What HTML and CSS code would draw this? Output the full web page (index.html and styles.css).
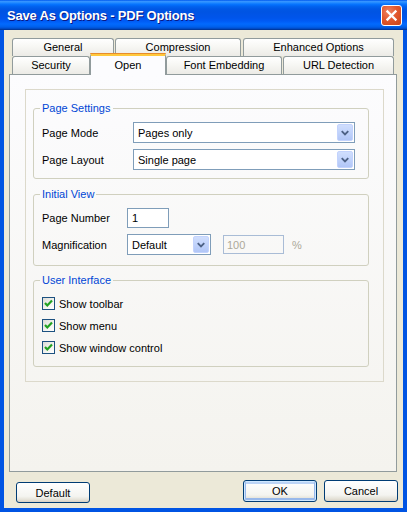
FILE: index.html
```html
<!DOCTYPE html>
<html>
<head>
<meta charset="utf-8">
<title>Save As Options - PDF Options</title>
<link rel="stylesheet" href="styles.css">
</head>
<body>
<div class="window">
  <div class="titlebar">
    <span class="title">Save As Options - PDF Options</span>
    <span class="close"><svg width="19" height="19" viewBox="0 0 19 19"><path d="M5.5 5.5 L13.5 13.5 M13.5 5.5 L5.5 13.5" stroke="#fff" stroke-width="2.4" stroke-linecap="square"/></svg></span>
  </div>
  <div class="client">
    <div class="tabs">
      <div class="tabrow">
        <div class="tab t-general">General</div>
        <div class="tab t-compression">Compression</div>
        <div class="tab t-enhanced">Enhanced Options</div>
      </div>
      <div class="tabrow">
        <div class="tab t-security">Security</div>
        <div class="tab selected t-open">Open</div>
        <div class="tab t-font">Font Embedding</div>
        <div class="tab t-url">URL Detection</div>
      </div>
    </div>
    <div class="panel">
      <div class="frame">
        <fieldset class="group g-page">
          <legend>Page Settings</legend>
          <div class="row">
            <span class="label l-page">Page Mode</span>
            <div class="select s-long"><span class="value">Pages only</span><span class="drop"><svg width="15" height="17" viewBox="0 0 15 17"><path d="M4 7 L7.5 10.5 L11 7" fill="none" stroke="#4D6185" stroke-width="2"/></svg></span></div>
          </div>
          <div class="row">
            <span class="label l-page">Page Layout</span>
            <div class="select s-long"><span class="value">Single page</span><span class="drop"><svg width="15" height="17" viewBox="0 0 15 17"><path d="M4 7 L7.5 10.5 L11 7" fill="none" stroke="#4D6185" stroke-width="2"/></svg></span></div>
          </div>
        </fieldset>
        <fieldset class="group g-view">
          <legend>Initial View</legend>
          <div class="row">
            <span class="label l-view">Page Number</span>
            <div class="textbox t-num">1</div>
          </div>
          <div class="row">
            <span class="label l-view">Magnification</span>
            <div class="select s-short"><span class="value">Default</span><span class="drop"><svg width="15" height="17" viewBox="0 0 15 17"><path d="M4 7 L7.5 10.5 L11 7" fill="none" stroke="#4D6185" stroke-width="2"/></svg></span></div>
            <div class="textbox disabled t-zoom">100</div>
            <span class="pct">%</span>
          </div>
        </fieldset>
        <fieldset class="group g-ui">
          <legend>User Interface</legend>
          <div class="check"><span class="box"><svg width="11" height="11" viewBox="0 0 11 11"><path d="M2 5 L4.3 7.5 L9 2.5" fill="none" stroke="#21A121" stroke-width="2.2"/></svg></span><span>Show toolbar</span></div>
          <div class="check"><span class="box"><svg width="11" height="11" viewBox="0 0 11 11"><path d="M2 5 L4.3 7.5 L9 2.5" fill="none" stroke="#21A121" stroke-width="2.2"/></svg></span><span>Show menu</span></div>
          <div class="check"><span class="box"><svg width="11" height="11" viewBox="0 0 11 11"><path d="M2 5 L4.3 7.5 L9 2.5" fill="none" stroke="#21A121" stroke-width="2.2"/></svg></span><span>Show window control</span></div>
        </fieldset>
      </div>
    </div>
    <div class="buttons">
      <button class="btn b-default">Default</button>
      <div class="btn-group">
        <button class="btn primary">OK</button>
        <button class="btn">Cancel</button>
      </div>
    </div>
  </div>
</div>
</body>
</html>
```

FILE: styles.css
```css
* { box-sizing: border-box; }
html, body { margin: 0; padding: 0; background: #fff; }
body {
  font-family: "Liberation Sans", Arial, sans-serif;
  font-size: 11px;
  color: #000;
}
.window {
  width: 407px;
  height: 512px;
  display: flex;
  flex-direction: column;
  background: #0054E3;
}
.titlebar {
  height: 30px;
  flex: none;
  display: flex;
  align-items: center;
  justify-content: space-between;
  padding: 0 5px 0 7px;
  background: linear-gradient(to bottom, #0058EE 0%, #3593FF 5%, #288EFF 8%, #127DFF 12%, #036FFC 16%, #0262EE 22%, #0057E5 30%, #0054E3 40%, #0055EB 60%, #005BF5 70%, #026AFE 80%, #0062EF 88%, #0052D6 94%, #0040AB 97%, #003092 100%);
}
.title {
  color: #fff;
  font-family: "Liberation Sans", Arial, sans-serif;
  font-weight: bold;
  font-size: 13px;
  letter-spacing: -0.2px;
  text-shadow: 1px 1px 0 #0A1883;
  margin-top: 1px;
}
.close {
  width: 21px;
  height: 21px;
  border: 1px solid #fff;
  border-radius: 3px;
  background: radial-gradient(circle at 35% 30%, #EE8363 0%, #E2592F 45%, #CC4418 100%);
  display: flex;
  align-items: center;
  justify-content: center;
  margin-top: 1px;
}
.close svg { display: block; }
.client {
  flex: 1;
  margin: 0 4px 4px 4px;
  background: #ECE9D8;
  padding: 8px 6px 0 5px;
}
.tabs {
  margin-left: 3px;
  display: flex;
  flex-direction: column;
}
.tabrow {
  display: flex;
  height: 18px;
  align-items: flex-start;
}
.tab {
  height: 18px;
  border: 1px solid #919B9C;
  border-bottom: 0;
  border-radius: 3px 3px 0 0;
  background: linear-gradient(to bottom, #FFFFFF 0%, #F8F8F5 40%, #ECEBE6 100%);
  display: flex;
  align-items: center;
  justify-content: center;
  padding-bottom: 1px;
  white-space: nowrap;
}
.t-general { width: 102px; }
.t-compression { width: 126px; margin-left: 1px; }
.t-enhanced { width: 151px; margin-left: 2px; }
.t-security { width: 78px; }
.t-open { width: 76px; }
.t-font { width: 116px; }
.t-url { width: 111px; margin-left: 1px; }
.tab.selected {
  position: relative;
  z-index: 1;
  height: 22px;
  margin-top: -3px;
  border-top: 3px solid #FFC83C;
  background: #FCFCFE;
  padding-bottom: 2px;
}
.tab.selected::before {
  content: "";
  position: absolute;
  left: -1px;
  right: -1px;
  top: -3px;
  height: 1px;
  background: #E68B2C;
  border-radius: 3px 3px 0 0;
}
.panel {
  width: 388px;
  height: 398px;
  border: 1px solid #919B9C;
  background: linear-gradient(to bottom, #FCFCFE 0%, #F4F3EE 100%);
  padding: 14px 0 0 15px;
}
.frame {
  width: 359px;
  height: 293px;
  border: 1px solid #DCD9CB;
  padding: 0 0 0 7px;
  display: flex;
  flex-direction: column;
}
.group {
  width: 336px;
  margin: 0;
  border: 1px solid #D0D0BF;
  border-radius: 3px;
  padding: 0 8px;
  min-width: 0;
}
.group legend {
  color: #0046D5;
  padding: 0 2px;
  margin-left: -2px;
  line-height: 13px;
  font-size: 11px;
}
.g-page { margin-top: 12px; padding-top: 7px; padding-bottom: 8px; }
.g-view { margin-top: 9px; padding-top: 7px; padding-bottom: 10px; }
.g-ui { margin-top: 8px; padding-top: 10px; padding-bottom: 12px; }
.row {
  display: flex;
  align-items: center;
}
.g-page .row + .row { margin-top: 6px; }
.g-view .row + .row { margin-top: 6px; }
.label { flex: none; }
.l-page { width: 91px; }
.l-view { width: 85px; }
.select {
  height: 21px;
  border: 1px solid #7F9DB9;
  background: #fff;
  display: flex;
  align-items: center;
  justify-content: space-between;
  padding: 0 1px 0 4px;
}
.s-long { width: 222px; }
.s-short { width: 84px; }
.drop {
  width: 16px;
  height: 17px;
  border: 1px solid #C3D3FD;
  border-radius: 2px;
  background: linear-gradient(to bottom, #D0DEFD 0%, #C1D3FB 50%, #B1C6F7 100%);
  display: flex;
  align-items: center;
  justify-content: center;
}
.drop svg { display: block; }
.textbox {
  height: 20px;
  border: 1px solid #7F9DB9;
  background: #fff;
  display: flex;
  align-items: center;
  padding-left: 4px;
}
.t-num { width: 42px; }
.t-zoom { width: 61px; margin-left: 12px; padding-left: 3px; height: 19px; }
.textbox.disabled {
  background: transparent;
  border-color: #A9BCD6;
  color: #ACA899;
}
.pct { color: #ACA899; margin-left: 8px; }
.check {
  display: flex;
  align-items: center;
  height: 13px;
}
.check + .check { margin-top: 9px; }
.box {
  width: 13px;
  height: 13px;
  border: 1px solid #1C5180;
  background: linear-gradient(135deg, #DCDCD7 0%, #F4F4F0 60%, #FFFFFF 100%);
  display: flex;
  align-items: center;
  justify-content: center;
  margin-right: 4px;
}
.box svg { display: block; }
.buttons {
  display: flex;
  justify-content: space-between;
  align-items: flex-start;
  margin: 8px -1px 0 7px;
}
.btn-group { display: flex; gap: 7px; }
.btn {
  width: 74px;
  height: 22px;
  border: 1px solid #003C74;
  border-radius: 3px;
  background: linear-gradient(to bottom, #FFFFFF 0%, #F4F4F0 70%, #E3E0D5 90%, #D6D0C5 100%);
  font-family: "Liberation Sans", Arial, sans-serif;
  font-size: 11px;
  color: #000;
  padding: 0;
  margin: 0;
}
.b-default { margin-top: 2px; height: 21px; }
.btn.primary {
  box-shadow: inset 0 0 0 1px #CEE7FF, inset 0 -1px 0 2px #98B8EA, inset 0 1px 0 2px #BCD4F6;
}
```
